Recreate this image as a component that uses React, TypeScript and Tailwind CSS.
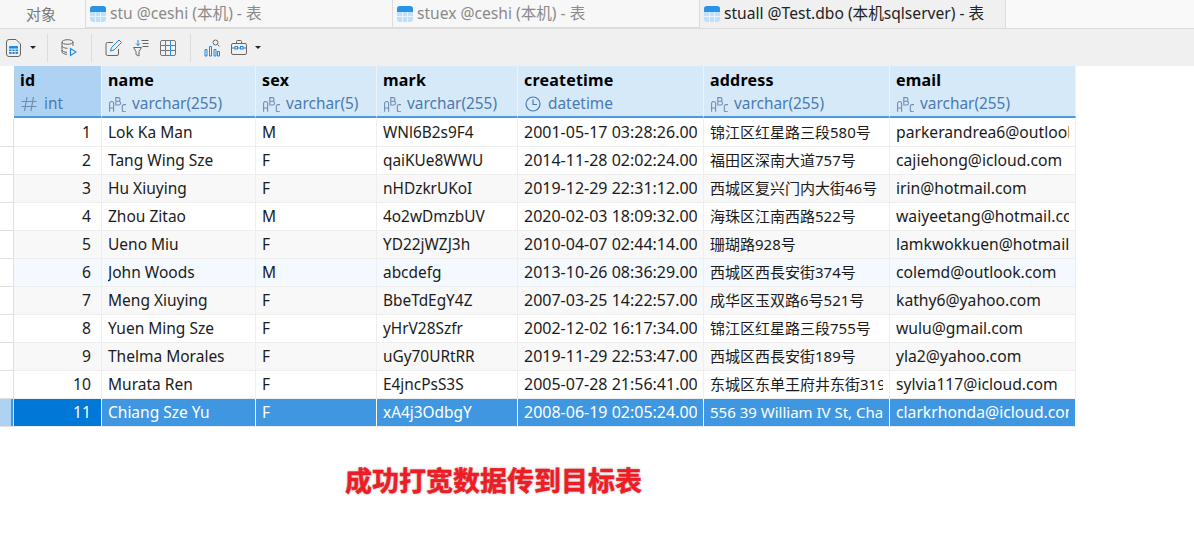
const columns = [
  { key: "id", type: "int", w: "w-[88px]", icon: "hash", size: "text-[15.7px]" },
  { key: "name", type: "varchar(255)", w: "w-[154px]", icon: "abc", size: "text-[15.5px]" },
  { key: "sex", type: "varchar(5)", w: "w-[121px]", icon: "abc", size: "text-[15.5px]" },
  { key: "mark", type: "varchar(255)", w: "w-[141px]", icon: "abc", size: "text-[15.4px]" },
  { key: "createtime", type: "datetime", w: "w-[186px]", icon: "clock", size: "text-[16px]" },
  { key: "address", type: "varchar(255)", w: "w-[186px]", icon: "abc", size: "text-[15px]" },
  { key: "email", type: "varchar(255)", w: "w-[186px]", icon: "abc", size: "text-[15.7px]" },
];

const rows = [
  ["1", "Lok Ka Man", "M", "WNl6B2s9F4", "2001-05-17 03:28:26.000", "锦江区红星路三段580号", "parkerandrea6@outlook.com"],
  ["2", "Tang Wing Sze", "F", "qaiKUe8WWU", "2014-11-28 02:02:24.000", "福田区深南大道757号", "cajiehong@icloud.com"],
  ["3", "Hu Xiuying", "F", "nHDzkrUKoI", "2019-12-29 22:31:12.000", "西城区复兴门内大街46号", "irin@hotmail.com"],
  ["4", "Zhou Zitao", "M", "4o2wDmzbUV", "2020-02-03 18:09:32.000", "海珠区江南西路522号", "waiyeetang@hotmail.com"],
  ["5", "Ueno Miu", "F", "YD22jWZJ3h", "2010-04-07 02:44:14.000", "珊瑚路928号", "lamkwokkuen@hotmail.com"],
  ["6", "John Woods", "M", "abcdefg", "2013-10-26 08:36:29.000", "西城区西長安街374号", "colemd@outlook.com"],
  ["7", "Meng Xiuying", "F", "BbeTdEgY4Z", "2007-03-25 14:22:57.000", "成华区玉双路6号521号", "kathy6@yahoo.com"],
  ["8", "Yuen Ming Sze", "F", "yHrV28Szfr", "2002-12-02 16:17:34.000", "锦江区红星路三段755号", "wulu@gmail.com"],
  ["9", "Thelma Morales", "F", "uGy70URtRR", "2019-11-29 22:53:47.000", "西城区西長安街189号", "yla2@yahoo.com"],
  ["10", "Murata Ren", "F", "E4jncPsS3S", "2005-07-28 21:56:41.000", "东城区东单王府井东街319号", "sylvia117@icloud.com"],
  ["11", "Chiang Sze Yu", "F", "xA4j3OdbgY", "2008-06-19 02:05:24.000", "556 39 William IV St, Charing Cross", "clarkrhonda@icloud.com"],
];

function TableIcon() {
  return (
    <svg width="16" height="16" viewBox="0 0 16 16" className="shrink-0">
      <rect x="0" y="0" width="16" height="16" rx="3" fill="#bfdffa" />
      <path d="M0 3a3 3 0 0 1 3-3h10a3 3 0 0 1 3 3v3H0z" fill="#2a93e8" />
      <path d="M5.500 6v10M10.500 6v10M0 10.500h16" stroke="#e6f3fd" strokeWidth="1" />
    </svg>
  );
}

function Tab({ label, w, active }: { label: string; w: string; active?: boolean }) {
  return (
    <div className={`${w} flex h-full items-center gap-[4px] border-r border-[#dcdcdc] pl-[4px] ${active ? "bg-[#f0f0f0] text-[#222]" : "border-b bg-[#f7f7f7] text-[#8a8a8a]"}`}>
      <TableIcon />
      <span className="whitespace-nowrap">{label}</span>
    </div>
  );
}

function AbcIcon() {
  return (
    <svg width="18" height="15" viewBox="0 0 18 15" fill="none" stroke="#6f8db3" strokeWidth="1.100" className="ml-px shrink-0">
      <path d="M.6 14.800V6.500a2 2 0 0 1 4 0v8.300M.6 11h4" />
      <path d="M6.800 .6h2.400a1.600 1.600 0 0 1 0 3.700H6.800zM6.800 4.300h2.900a1.700 1.700 0 0 1 0 3.700H6.800z" />
      <path d="M17 7.600h-2A1.700 1.700 0 0 0 13.300 9.300v3.800a1.700 1.700 0 0 0 1.700 1.700h2" />
    </svg>
  );
}

function ClockIcon() {
  return (
    <svg width="16" height="16" viewBox="0 0 16 16" fill="none" stroke="#4a7ab0" strokeWidth="1.200" className="ml-px shrink-0">
      <circle cx="8" cy="8" r="7" />
      <path d="M8 3.500V8.500H12" />
    </svg>
  );
}

function HashIcon() {
  return (
    <svg width="16" height="16" viewBox="0 0 16 16" fill="none" stroke="#6f8db3" strokeWidth="1.200" className="ml-px shrink-0">
      <path d="M6 1L3.500 15M12.500 1L10 15M.5 5.500h15M.5 10.500h15" />
    </svg>
  );
}

function Sep({ className }: { className: string }) {
  return <div className={`${className} h-[28px] w-px shrink-0 bg-[#dcdcdc]`} />;
}

function Caret({ className }: { className: string }) {
  return <div className={`${className} h-0 w-0 shrink-0 border-x-[3px] border-t-[3px] border-x-transparent border-t-[#222]`} />;
}

function Toolbar() {
  return (
    <div className="flex h-[37px] items-center bg-[#f0f0f0] pl-[6px]">
      <svg width="15" height="18" viewBox="0 0 15 18" fill="none" className="shrink-0">
        <path d="M3 .5h7l4.500 4.500V15a2.500 2.500 0 0 1-2.500 2.500H3A2.500 2.500 0 0 1 .5 15V3A2.500 2.500 0 0 1 3 .5z" stroke="#666" />
        <rect x="3" y="7" width="9" height="8" rx="1" fill="#1e88e5" />
        <path d="M3 10h9M3 12.500h9M6 10v5M9 10v5" stroke="#fff" strokeWidth=".8" />
      </svg>
      <Caret className="ml-[9px]" />
      <Sep className="ml-[11px]" />
      <svg width="16" height="18" viewBox="0 0 16 18" fill="none" className="ml-[13px] shrink-0">
        <ellipse cx="6.500" cy="3" rx="5.500" ry="2.300" stroke="#666" />
        <path d="M1 3v10c0 1.300 2.500 2.300 5 2.300M12 3v4M1 7c0 1.300 2.500 2.300 5.500 2.300M1 11c0 1.300 2.500 2.300 5 2.300" stroke="#666" />
        <path d="M9.500 9.500v7l5.500-3.500z" stroke="#1e88e5" strokeWidth="1.200" />
      </svg>
      <Sep className="ml-[14px]" />
      <svg width="17" height="17" viewBox="0 0 17 17" fill="none" className="ml-[13px] shrink-0">
        <path d="M8 3.500H2.500A1.500 1.500 0 0 0 1 5v10a1.500 1.500 0 0 0 1.500 1.500h9.500a1.500 1.500 0 0 0 1.500-1.500v-5" stroke="#666" />
        <path d="M5.500 12l1-3.500L14 1l2.500 2.500L9 11z" stroke="#1e88e5" />
      </svg>
      <svg width="16" height="18" viewBox="0 0 16 18" fill="none" className="ml-[11px] shrink-0">
        <path d="M.5 8.500h8L6 12.500v4.500l-3-1.500v-3z" stroke="#666" />
        <path d="M5 1v5.500M3 4.500l2 2 2-2" stroke="#1e88e5" />
        <path d="M8.500 1.500h7M9.500 4.500h6M9.500 7.500h6" stroke="#666" />
      </svg>
      <svg width="16" height="16" viewBox="0 0 16 16" fill="none" className="ml-[11px] shrink-0">
        <path d="M.5 5.500h15M.5 10.500h15" stroke="#777" />
        <path d="M5.500 .5v15M10.500 .5v15" stroke="#1e93f0" />
        <rect x=".5" y=".5" width="15" height="15" rx="1.500" stroke="#777" />
      </svg>
      <Sep className="ml-[14px]" />
      <svg width="16" height="18" viewBox="0 0 16 18" fill="none" className="ml-[13px] shrink-0">
        <path d="M1 10.500h2v6.500H1zM5.500 7.500h2v9.500h-2zM10 10.500h2v6.500h-2zM13.500 12.500h2v4.500h-2z" stroke="#1e88e5" />
        <circle cx="11.500" cy="3.500" r="2.500" stroke="#666" />
        <path d="M13.500 5.500l2 2" stroke="#666" />
      </svg>
      <svg width="16" height="15" viewBox="0 0 16 15" fill="none" className="ml-[11px] shrink-0">
        <rect x=".5" y="3.500" width="15" height="11" rx="1.500" stroke="#666" />
        <path d="M5.500 3.500v-2a1 1 0 0 1 1-1h3a1 1 0 0 1 1 1v2M.5 8h3.500M12 8h3.500" stroke="#666" />
        <rect x="4" y="6.500" width="2.500" height="2.500" stroke="#1e88e5" />
        <rect x="9.500" y="6.500" width="2.500" height="2.500" stroke="#1e88e5" />
        <path d="M6.500 8h3" stroke="#1e88e5" />
      </svg>
      <Caret className="ml-[8px]" />
    </div>
  );
}

function Header() {
  return (
    <div className="flex h-[52px] pl-[14px]">
      {columns.map((c, i) => (
        <div
          key={c.key}
          className={`${c.w} flex flex-col border-r border-b-2 border-r-[#eef3f8] border-b-[#4a9be0] pl-[6px] ${i === 0 ? "bg-[#aed3f2]" : "bg-[#d6e9f9]"}`}
        >
          <div className="mt-[2px] h-[24px] text-[16px] leading-[24px] font-bold tracking-[0.2px] text-black">{c.key}</div>
          <div className="mt-[2px] flex h-[20px] items-center text-[15.4px] text-[#4a7ab0]">
            {c.icon === "abc" && <AbcIcon />}
            {c.icon === "hash" && <HashIcon />}
            {c.icon === "clock" && <ClockIcon />}
            <span className={`whitespace-nowrap ${c.icon === "abc" ? "ml-[5px]" : "ml-[7px]"}`}>{c.type}</span>
          </div>
        </div>
      ))}
    </div>
  );
}

function Row({ cells, index }: { cells: string[]; index: number }) {
  const selected = index === 10;
  const tint = index === 5 ? "bg-[#f3f9fe]" : index % 2 === 0 ? "bg-[#f8f8f8]" : "bg-white";
  const first = index === 0;
  return (
    <div className={`flex h-[28px] ${first ? "mt-px" : ""}`}>
      <div className={`flex h-full w-[14px] shrink-0 border-r border-b border-[#e0e0e0] ${selected ? "bg-[#aed3f2]" : "bg-white"}`}>
        {selected && <div className="ml-[11px] h-full w-[2px] bg-[#3f97e2]" />}
      </div>
      {cells.map((text, i) => {
        let bg = first ? "bg-white" : tint;
        if (selected) bg = i === 0 ? "bg-[#0078d7]" : "bg-[#3f97e2]";
        return (
          <div
            key={i}
            className={`${columns[i].w} ${columns[i].size} h-full overflow-hidden border-r border-b px-[6px] leading-[27px] whitespace-nowrap ${
              selected ? "border-r-white border-b-[#eeeeee] text-white" : "border-[#eeeeee] text-[#1b1b1b]"
            } ${i === 0 ? "pr-[10px] text-right" : ""} ${bg}`}
          >
            <div className="overflow-hidden">{text}</div>
          </div>
        );
      })}
    </div>
  );
}

export default function App() {
  return (
    <div className="h-[538px] w-[1194px] overflow-hidden bg-white font-['Noto_Sans','Noto_Sans_CJK_SC',sans-serif]">
      <div className="flex h-[29px] border-b border-[#dcdcdc] bg-[#f9f9f9] text-[15.6px]">
        <div className="flex w-[86px] items-center justify-center border-r border-[#dcdcdc] bg-[#f7f7f7] pr-[3px] text-[15px] text-[#777]">对象</div>
        <Tab label="stu @ceshi (本机) - 表" w="w-[307px]" />
        <Tab label="stuex @ceshi (本机) - 表" w="w-[307px]" />
        <Tab label="stuall @Test.dbo (本机sqlserver) - 表" w="w-[306px]" active />
      </div>
      <Toolbar />
      <Header />
      {rows.map((cells, i) => (
        <Row key={i} cells={cells} index={i} />
      ))}
      <div className="mt-[35px] pl-[345px] font-['Noto_Sans_CJK_SC',sans-serif] text-[27px] leading-[36px] font-bold text-[#ee1c25] [-webkit-text-stroke:0.5px_#ee1c25] [text-shadow:0_0_3px_#aaa]">
        成功打宽数据传到目标表
      </div>
    </div>
  );
}
